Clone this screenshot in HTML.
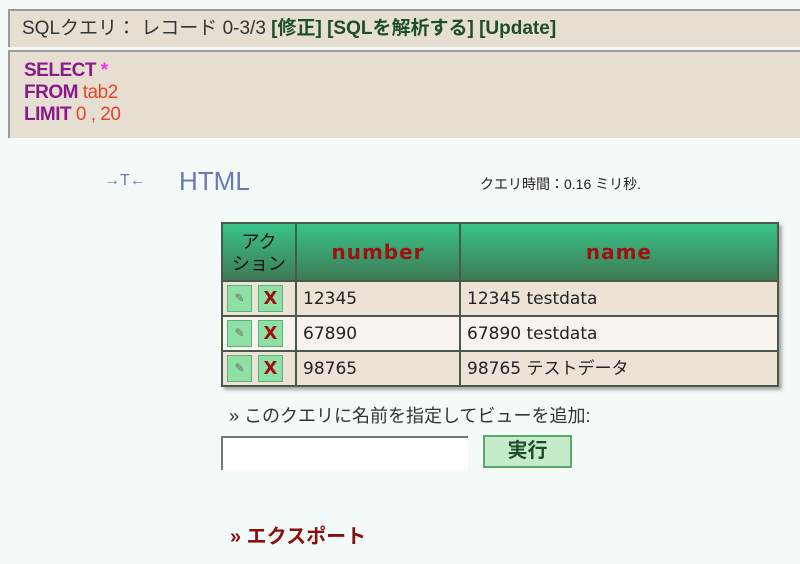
<!DOCTYPE html>
<html><head><meta charset="utf-8"><style>
body{margin:0;width:800px;height:564px;background:#f4faf8;font-family:"Liberation Sans","Noto Sans CJK JP",sans-serif;position:relative;overflow:hidden}
.a{position:absolute}
.hdr{left:8px;top:9px;width:792px;height:38px;background:#e6dfd1;border-top:2px solid #9a9a98;border-left:2px solid #9a9a98;box-sizing:border-box;font-size:19px;color:#333;line-height:36px;padding-left:12px;white-space:nowrap}
.hdr b{color:#1e4d2b}
.sql{left:8px;top:50px;width:792px;height:88px;background:#e6dfd1;border-top:2px solid #9a9a98;border-left:2px solid #9a9a98;box-sizing:border-box;padding:8px 0 0 14px;font-family:"Liberation Sans Narrow","Liberation Sans",sans-serif;font-size:19px;line-height:22px;font-weight:bold;color:#8a1a8a;letter-spacing:-0.5px}
.sql span{color:#e8442a;font-weight:normal}
table{border-collapse:collapse;position:absolute;left:221px;top:222px;width:558px;box-shadow:3px 3px 3px #aaa}
td,th{border:2px solid #4a5a4a;padding:0}
th{height:56px;background:linear-gradient(#38c488,#3e7a56);color:#a01010;font-size:20px;font-family:"DejaVu Sans",sans-serif;letter-spacing:1px}
td{font-family:"DejaVu Sans","Noto Sans CJK JP",sans-serif;font-size:17px;color:#222;padding-left:6px;height:33px;line-height:20px;vertical-align:middle}
.ic{display:inline-block;width:23px;height:25px;background:#8ee0a4;border:1px solid #5ab078;vertical-align:middle;margin-right:6px;text-align:center;color:#a01010;font-weight:bold;font-size:18px;line-height:25px;font-family:"DejaVu Sans",sans-serif}
</style></head><body>
<div class="a hdr">SQLクエリ： レコード 0-3/3 <b>[修正] [SQLを解析する] [Update]</b></div>
<div class="a sql">SELECT <span style="color:#f030f0;font-weight:bold">*</span><br>FROM <span>tab2</span><br>LIMIT <span>0 , 20</span></div>
<div class="a" style="left:104px;top:172px;font-size:16px;color:#6a78b8">→T←</div>
<div class="a" style="left:179px;top:166px;font-size:26px;color:#6a78b8">HTML</div>
<div class="a" style="left:480px;top:174px;font-size:14px;color:#222">クエリ時間：0.16 ミリ秒.</div>
<table>
<tr><th style="width:72px;color:#111;font-size:18px;font-family:'Noto Sans CJK JP',sans-serif;line-height:22px;letter-spacing:0;font-weight:normal">アク<br>ション</th><th style="width:162px">number</th><th>name</th></tr>
<tr style="background:#ece2d6"><td style="padding-left:4px"><span class="ic" style="color:#666;font-size:12px">✎</span><span class="ic">X</span></td><td>12345</td><td>12345 testdata</td></tr>
<tr style="background:#f8f3ee"><td style="padding-left:4px"><span class="ic" style="color:#666;font-size:12px">✎</span><span class="ic">X</span></td><td>67890</td><td>67890 testdata</td></tr>
<tr style="background:#ece2d6"><td style="padding-left:4px"><span class="ic" style="color:#666;font-size:12px">✎</span><span class="ic">X</span></td><td>98765</td><td>98765 テストデータ</td></tr>
</table>
<div class="a" style="left:229px;top:402px;font-size:18px;color:#333">» このクエリに名前を指定してビューを追加:</div>
<div class="a" style="left:221px;top:436px;width:247px;height:34px;background:#fff;border-top:2px solid #777;border-left:2px solid #777;box-sizing:border-box"></div>
<div class="a" style="left:483px;top:435px;width:89px;height:33px;background:#c4ecc8;border:2px solid #5aa86c;box-sizing:border-box;text-align:center;font-size:20px;line-height:29px;color:#1e4d2b;font-weight:bold">実行</div>
<div class="a" style="left:230px;top:520px;font-size:20px;font-weight:bold;color:#8a1010">» エクスポート</div>
</body></html>
